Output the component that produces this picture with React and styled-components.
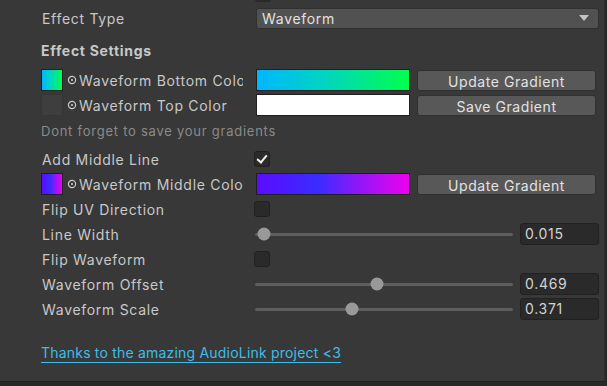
import React from 'react';
import styled, { createGlobalStyle } from 'styled-components';

const GlobalStyle = createGlobalStyle`
  html, body {
    margin: 0;
    padding: 0;
    background: #282828;
  }
  body {
    font-family: Inter, "Noto Sans", sans-serif;
    font-size: 14px;
    letter-spacing: 0.7px;
    color: #c8c8c8;
  }
`;

const GRADIENTS = {
  bottom: 'linear-gradient(90deg, #00b6ff 0%, #00d6c0 45%, #00ff4c 100%)',
  top: '#ffffff',
  middle: 'linear-gradient(90deg, #5a0cff 0%, #3a2cff 40%, #8a18f8 65%, #ee00ee 100%)',
};

const App = () => {
  return (
    <>
      <GlobalStyle />
      <Panel>
        <TopStub />
        <Row $mt={5}>
          <Label>Effect Type</Label>
          <Dropdown>
            <span>Waveform</span>
            <Arrow />
          </Dropdown>
        </Row>

        <Heading>Effect Settings</Heading>

        <ColorRow $mt={7} label="Waveform Bottom Color" gradient={GRADIENTS.bottom} button="Update Gradient" />
        <ColorRow $mt={3} label="Waveform Top Color" gradient={GRADIENTS.top} button="Save Gradient" empty />

        <Note>Dont forget to save your gradients</Note>

        <Row $mt={6}>
          <Label>Add Middle Line</Label>
          <Checkbox checked />
        </Row>
        <ColorRow $mt={3} label="Waveform Middle Color" gradient={GRADIENTS.middle} button="Update Gradient" />
        <Row $mt={3}>
          <Label>Flip UV Direction</Label>
          <Checkbox />
        </Row>
        <SliderRow label="Line Width" value={0.015} pos={0.035} />
        <Row $mt={3}>
          <Label>Flip Waveform</Label>
          <Checkbox />
        </Row>
        <SliderRow label="Waveform Offset" value={0.469} pos={0.473} />
        <SliderRow label="Waveform Scale" value={0.371} pos={0.376} />

        <LinkLine>
          <Link>Thanks to the amazing AudioLink project &lt;3</Link>
        </LinkLine>
      </Panel>
    </>
  );
};

const ColorRow = ({ label, gradient, button, empty, $mt }) => (
  <Row $mt={$mt}>
    <ColorLabel>
      <Swatch style={{ background: empty ? '#3e3e3e' : gradient }} $empty={empty} />
      <PickIcon width="10" height="10" viewBox="0 0 10 10">
        <circle cx="5" cy="5" r="3.6" fill="none" stroke="#c8c8c8" strokeWidth="1.2" />
        <circle cx="5" cy="5" r="1.1" fill="#c8c8c8" />
      </PickIcon>
      <ClipText>{label}</ClipText>
    </ColorLabel>
    <Controls>
      <GradientField style={{ background: gradient }} />
      <Button>{button}</Button>
    </Controls>
  </Row>
);

const SliderRow = ({ label, value, pos }) => (
  <Row $mt={3}>
    <Label>{label}</Label>
    <Controls>
      <Track>
        <Knob style={{ left: `${pos * 100}%` }} />
      </Track>
      <NumberField>{value.toFixed(3)}</NumberField>
    </Controls>
  </Row>
);

export default App;

const Panel = styled.div`
  position: relative;
  width: 605px;
  height: 382px;
  background: #383838;
  border-right: 1px solid #2e2e2e;
  border-bottom: 1px solid #1f1f1f;
  padding: 2px 0 0 41px;
  box-sizing: border-box;
  display: flex;
  flex-direction: column;
  overflow: hidden;
`;

const TopStub = styled.div`
  position: absolute;
  top: 0;
  left: 255px;
  width: 16px;
  height: 2px;
  background: #2a2a2a;
  border-radius: 0 0 2px 2px;
`;

const Row = styled.div`
  display: grid;
  grid-template-columns: 214px 344px;
  align-items: center;
  height: 22px;
  margin-top: ${({ $mt }) => $mt || 0}px;
`;

const Label = styled.div`
  padding-left: 1px;
  white-space: nowrap;
  color: #c8c8c8;
`;

const Dropdown = styled.div`
  display: flex;
  align-items: center;
  justify-content: space-between;
  height: 21px;
  margin-left: 1px;
  padding: 0 9px 0 5px;
  background: #515151;
  border: 1px solid #303030;
  border-radius: 3px;
  color: #e2e2e2;
  box-sizing: border-box;
`;

const Arrow = styled.span`
  width: 0;
  height: 0;
  border-left: 5px solid transparent;
  border-right: 5px solid transparent;
  border-top: 6px solid #c4c4c4;
`;

const Heading = styled.div`
  margin-top: 11px;
  height: 22px;
  line-height: 22px;
  font-weight: 700;
  color: #c8c8c8;
`;

const ColorLabel = styled.div`
  display: flex;
  align-items: center;
  min-width: 0;
  width: 202px;
`;

const Swatch = styled.div`
  flex: none;
  width: 20px;
  height: 20px;
  border: 1px solid ${({ $empty }) => ($empty ? '#353535' : '#1e1e1e')};
  margin-right: 4px;
`;

const PickIcon = styled.svg`
  flex: none;
  margin-right: 2px;
`;

const ClipText = styled.span`
  white-space: nowrap;
  overflow: hidden;
  color: #c8c8c8;
`;

const Controls = styled.div`
  display: flex;
  align-items: center;
  gap: 7px;
  height: 22px;
  padding-left: 1px;
`;

const GradientField = styled.div`
  flex: none;
  width: 154px;
  height: 22px;
  border: 1px solid #1f1f1f;
  box-sizing: border-box;
`;

const Button = styled.div`
  flex: none;
  width: 179px;
  height: 21px;
  line-height: 21px;
  text-align: center;
  letter-spacing: 0.55px;
  background: #585858;
  border: 1px solid #303030;
  border-radius: 3px;
  box-sizing: border-box;
  color: #e2e2e2;
`;

const Note = styled.div`
  margin-top: 4px;
  height: 22px;
  line-height: 22px;
  font-size: 13px;
  letter-spacing: 0.75px;
  color: #8a8a8a;
`;

const Checkbox = styled.div`
  width: 16px;
  height: 16px;
  margin-left: -1px;
  background: #2a2a2a;
  border: 1px solid #202020;
  border-radius: 3px;
  box-sizing: border-box;
  position: relative;
  &::after {
    content: '';
    display: ${({ checked }) => (checked ? 'block' : 'none')};
    position: absolute;
    left: 4px;
    top: 1px;
    width: 4px;
    height: 8px;
    border: solid #f0f0f0;
    border-width: 0 2px 2px 0;
    transform: rotate(40deg);
  }
`;

const Track = styled.div`
  position: relative;
  flex: none;
  width: 258px;
  height: 3px;
  margin-left: -1px;
  background: #5e5e5e;
  border-radius: 2px;
`;

const Knob = styled.div`
  position: absolute;
  top: 50%;
  width: 13px;
  height: 13px;
  border-radius: 50%;
  background: #999999;
  transform: translate(-50%, -50%);
`;

const NumberField = styled.div`
  flex: none;
  width: 79px;
  height: 22px;
  line-height: 20px;
  padding-left: 4px;
  background: #2a2a2a;
  border: 1px solid #212121;
  border-radius: 3px;
  box-sizing: border-box;
  color: #d2d2d2;
`;

const LinkLine = styled.div`
  margin-top: 22px;
  height: 22px;
  line-height: 22px;
  letter-spacing: 0.2px;
`;

const Link = styled.a`
  color: #3dbde8;
  text-decoration: none;
  border-bottom: 1px solid #3dbde8;
  padding-bottom: 1px;
  cursor: pointer;
`;
